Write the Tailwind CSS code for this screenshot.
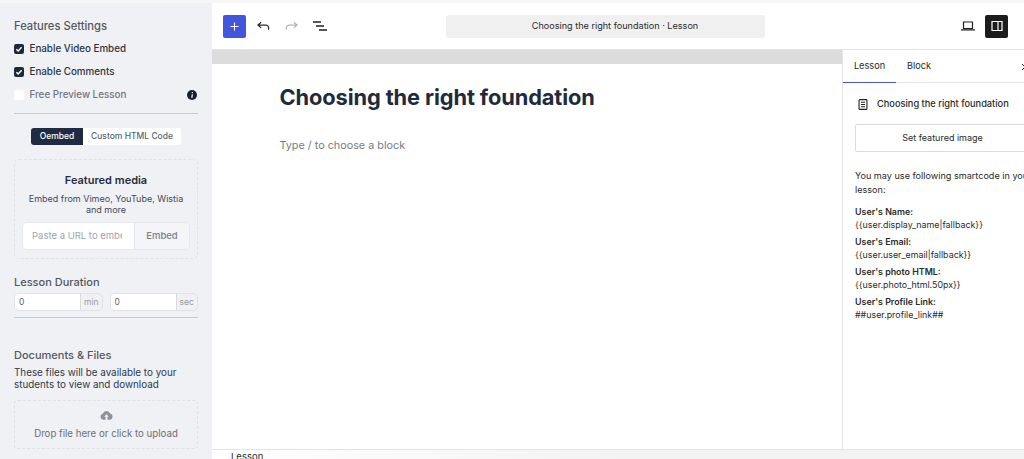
<!DOCTYPE html>
<html lang="en">
<head>
<meta charset="UTF-8" />
<title>Lesson editor</title>
<script src="https://cdn.jsdelivr.net/npm/@tailwindcss/browser@4"></script>
</head>
<body class="w-[1024px] h-[459px] overflow-hidden bg-white font-['Inter',sans-serif] text-[#1e293b]">
<div class="h-[3px] bg-[#f6f6f6]"></div>
<div class="flex h-[456px]">
    <!-- left settings column -->
    <aside class="w-[212px] shrink-0 h-full overflow-hidden bg-[#f0f1f4] px-[14px] pt-[14px]">
        <h3 class="text-[11.2px] leading-[18px] font-medium text-[#53585f]">Features Settings</h3>
        <label class="flex items-center gap-[5.5px] mt-[5px] h-[18px] text-[9.8px] font-medium text-[#2b3444]">
            <span class="w-[10px] h-[10px] rounded-[2px] bg-[#1e293b] flex items-center justify-center">
                <svg viewBox="0 0 10 10" class="w-[10px] h-[10px]"><path d="M2.400 5.200l1.800 1.800 3.400-3.800" fill="none" stroke="#fff" stroke-width="1.400"/></svg>
            </span>
            Enable Video Embed
        </label>
        <label class="flex items-center gap-[5.5px] mt-[5px] h-[18px] text-[9.8px] font-medium text-[#2b3444]">
            <span class="w-[10px] h-[10px] rounded-[2px] bg-[#1e293b] flex items-center justify-center">
                <svg viewBox="0 0 10 10" class="w-[10px] h-[10px]"><path d="M2.400 5.200l1.800 1.800 3.400-3.800" fill="none" stroke="#fff" stroke-width="1.400"/></svg>
            </span>
            Enable Comments
        </label>
        <label class="flex items-center gap-[5.5px] mt-[5px] h-[18px] text-[9.8px] font-medium text-[#71767e]">
            <span class="w-[10px] h-[10px] rounded-[2px] bg-white"></span>
            Free Preview Lesson
            <svg viewBox="0 0 10 10" class="w-[10px] h-[10px] ml-auto mr-[1px]"><circle cx="5" cy="5" r="5" fill="#16202e"/><path d="M5.400 2.100v1.200M5.400 4.300L4.800 7.800" stroke="#fff" stroke-width="1.200" fill="none"/></svg>
        </label>
        <div class="h-px bg-[#c9ccd3] mt-[9px]"></div>

        <div class="flex justify-center mt-[14px]">
            <div class="flex h-[17px] rounded-[3px] overflow-hidden text-[8.5px] font-medium bg-white">
                <span class="w-[52px] flex items-center justify-center bg-[#1e2b42] text-white">Oembed</span>
                <span class="w-[98px] flex items-center justify-center text-[#5d6672]">Custom HTML Code</span>
            </div>
        </div>

        <div class="mt-[14px] h-[100px] border border-dashed border-[#dfe2e8] rounded-[5px] px-[7px] pt-[12px] text-center">
            <h4 class="text-[11px] leading-[16px] font-semibold text-[#262f3e]">Featured media</h4>
            <p class="mt-[5px] text-[9px] leading-[11px] text-[#414a58]">Embed from Vimeo, YouTube, Wistia<br />and more</p>
            <div class="flex mt-[7px] h-[28px] rounded-[5px] border border-[#e6e8ed] overflow-hidden text-[9.500px] text-left">
                <div class="w-[111px] bg-white pl-[9px] flex items-center text-[#a0a5ae]">
                    <span class="block w-[90px] overflow-hidden whitespace-nowrap">Paste a URL to embed</span>
                </div>
                <span class="flex-1 bg-[#f3f5f8] border-l border-[#e2e4e9] flex items-center justify-center font-medium text-[#7b808a]">Embed</span>
            </div>
        </div>

        <h3 class="mt-[15px] text-[11px] leading-[16px] font-medium text-[#53585f]">Lesson Duration</h3>
        <div class="flex gap-[7px] mt-[3px] text-[8.500px]">
            <div class="flex flex-1 h-[18px] rounded-[5px] border border-[#e0e2e7] overflow-hidden">
                <span class="w-[66px] bg-white border-r border-[#d8dbe1] pl-[4px] flex items-center text-[#5d6672]">0</span>
                <span class="flex-1 flex items-center justify-center text-[#989da6]">min</span>
            </div>
            <div class="flex flex-1 h-[18px] rounded-[5px] border border-[#e0e2e7] overflow-hidden">
                <span class="w-[66px] bg-white border-r border-[#d8dbe1] pl-[4px] flex items-center text-[#5d6672]">0</span>
                <span class="flex-1 flex items-center justify-center text-[#989da6]">sec</span>
            </div>
        </div>
        <div class="h-px bg-[#c9ccd3] mt-[6px]"></div>

        <h3 class="mt-[28.500px] text-[11px] leading-[16px] font-medium text-[#53585f]">Documents &amp; Files</h3>
        <p class="mt-[3.500px] text-[9.850px] leading-[12px] text-[#2f3a4a]">These files will be available to your<br />students to view and download</p>
        <div class="mt-[10px] h-[49px] border border-dashed border-[#dfe2e8] rounded-[4px] flex flex-col items-center pt-[9px]">
            <svg viewBox="0 0 14 10" class="w-[13px] h-[10px]"><path d="M3.500 10A3.200 3.200 0 0 1 3 3.700 4.200 4.200 0 0 1 11 3.500 3.300 3.300 0 0 1 10.700 10H8V7h1.500L7 4.200 4.500 7H6v3z" fill="#8d929b"/></svg>
            <span class="mt-[8px] text-[9.700px] leading-[12px] text-[#6b7079]">Drop file here or click to upload</span>
        </div>
    </aside>

    <!-- editor -->
    <main class="w-[812px] shrink-0 h-full flex flex-col overflow-hidden">
        <header class="h-[46px] shrink-0 flex items-center pl-[11px] pr-[16px]">
            <button class="w-[23px] h-[23px] rounded-[2px] bg-[#4355dc] flex items-center justify-center">
                <svg viewBox="0 0 10 10" class="w-[9px] h-[9px]"><path d="M5 .5v9M.5 5h9" stroke="#fff" stroke-width="1.200"/></svg>
            </button>
            <svg viewBox="0 0 14 10" class="w-[13px] h-[10px] ml-[11px]"><path d="M4.500 1L1 4l3.500 3M1 4h8.500a3 3 0 0 1 3 3v2" fill="none" stroke="#2b2b2b" stroke-width="1.300"/></svg>
            <svg viewBox="0 0 14 10" class="w-[13px] h-[10px] ml-[15px]"><path d="M9.500 1L13 4 9.500 7M13 4H4.500a3 3 0 0 0-3 3v2" fill="none" stroke="#b4b4b4" stroke-width="1.300"/></svg>
            <svg viewBox="0 0 14 10" class="w-[14px] h-[10px] ml-[15px]"><path d="M0 1h8M3 5h8M6 9h8" fill="none" stroke="#222" stroke-width="1.300"/></svg>
            <div class="ml-[119px] w-[319px] h-[23px] rounded-[3px] bg-[#f0f0f0] flex items-center justify-center pl-[19px] text-[9.100px] text-[#2b2b2b]">Choosing the right foundation · Lesson</div>
            <div class="ml-auto flex items-center gap-[10px]">
                <svg viewBox="0 0 14 10" class="w-[14px] h-[10px]"><path d="M2.500 1h9v6.500h-9zM0 8.800h14" fill="none" stroke="#222" stroke-width="1.200"/></svg>
                <div class="w-[23px] h-[23px] rounded-[2px] bg-[#1c1c1c] flex items-center justify-center">
                    <svg viewBox="0 0 12 12" class="w-[12px] h-[12px]"><path d="M1 1.500h10v9H1zM7 1.500v9" fill="none" stroke="#fff" stroke-width="1.200"/></svg>
                </div>
            </div>
        </header>

        <div class="flex flex-1 min-h-0 border-t border-[#e4e4e4]">
            <section class="w-[630px] shrink-0 flex flex-col">
                <div class="h-[14px] bg-[#dcdcdc]"></div>
                <div class="pl-[67.500px] pt-[18px]">
                    <h1 class="text-[21.800px] leading-[30px] font-bold text-[#1e2b3c] tracking-[-0.1px]">Choosing the right foundation</h1>
                    <p class="mt-[25px] text-[10.800px] leading-[18px] text-[#757c86]">Type / to choose a block</p>
                </div>
            </section>

            <section class="w-[182px] shrink-0 border-l border-[#e4e4e4] overflow-hidden">
                <div class="flex items-center h-[33px] border-b border-[#e4e4e4] text-[9.200px] text-[#2b2b2b] relative">
                    <span class="w-[53px] h-[33px] flex items-center justify-center border-b-[1.500px] border-[#4355dc]">Lesson</span>
                    <span class="ml-[11px]">Block</span>
                    <svg viewBox="0 0 8 8" class="absolute left-[178px] top-[13px] w-[8px] h-[8px]"><path d="M1 1l6 6M7 1L1 7" stroke="#222" stroke-width="1"/></svg>
                </div>
                <div class="w-[200px] pl-[12px]">
                    <div class="flex items-center gap-[9px] h-[14px] mt-[14px] text-[9.250px] font-medium text-[#2b2b2b] whitespace-nowrap">
                        <svg viewBox="0 0 10 12" class="w-[10px] h-[11px] ml-[3px] shrink-0"><path d="M1.500 .7h7a.8.8 0 0 1 .8.8v9a.8.8 0 0 1-.8.8h-7a.8.8 0 0 1-.8-.8v-9a.8.8 0 0 1 .8-.8zM2.800 3.500h4.400M2.800 6h4.400M2.800 8.500h4.400" fill="none" stroke="#222" stroke-width="1.200"/></svg>
                        Choosing the right foundation
                    </div>
                    <button class="mt-[13px] w-[175px] h-[28px] rounded-[2px] border border-[#dcdcdc] bg-white text-[9px] text-[#2b2b2b]">Set featured image</button>
                    <p class="mt-[17px] text-[9.100px] leading-[14px] text-[#2b2b2b] whitespace-nowrap">You may use following smartcode in your<br />lesson:</p>
                    <dl class="text-[8.900px] leading-[13px] text-[#2b2b2b] whitespace-nowrap mt-[8px]">
                        <dt class="font-semibold">User's Name:</dt>
                        <dd class="mb-[4px]">{{user.display_name|fallback}}</dd>
                        <dt class="font-semibold">User's Email:</dt>
                        <dd class="mb-[4px]">{{user.user_email|fallback}}</dd>
                        <dt class="font-semibold">User's photo HTML:</dt>
                        <dd class="mb-[4px]">{{user.photo_html.50px}}</dd>
                        <dt class="font-semibold">User's Profile Link:</dt>
                        <dd>##user.profile_link##</dd>
                    </dl>
                </div>
            </section>
        </div>

        <footer class="h-[10px] shrink-0 border-t border-[#e4e4e4] pl-[19px] text-[9.500px] leading-[14px] text-[#2b2b2b] overflow-hidden bg-gradient-to-r from-white via-[#f3f3f3] to-[#f3f3f3]">Lesson</footer>
    </main>
</div>
</body>
</html>
